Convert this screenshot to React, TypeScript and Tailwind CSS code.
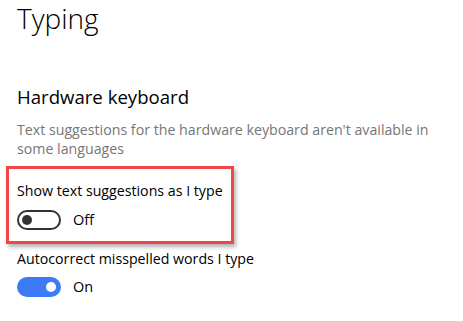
export default function App() {
  const font = { fontFamily: '"Open Sans", "Noto Sans", sans-serif' };
  return (
    <div className="w-[463px] h-[321px] bg-white overflow-hidden" style={font}>
      <div className="pl-[17px]">
        <h1 className="text-[28px] font-light leading-[34px] pt-[1px] text-[#000]">Typing</h1>
        <h2 className="mt-[49px] text-[18.6px] leading-[26px] text-[#000]">Hardware keyboard</h2>
        <p className="mt-[10px] text-[14.2px] leading-[19px] text-[#767676] w-[435px]">
          Text suggestions for the hardware keyboard aren't available in some languages
        </p>
      </div>
      <div className="ml-[6px] mt-[8px] w-[228px] h-[78px] border-[3px] border-[#f2454a] shadow-[2px_3px_4px_rgba(0,0,0,0.3)] pl-[8px] pt-[12px]">
        <div className="text-[14.2px] leading-[20px] text-[#000]">Show text suggestions as I type</div>
        <div className="mt-[8px] flex items-center gap-[12px]">
          <div className="w-[44px] h-[20px] rounded-full border-2 border-[#333] flex items-center pl-[3px]">
            <div className="w-[10px] h-[10px] rounded-full bg-[#333]" />
          </div>
          <span className="text-[14.5px] text-[#000]">Off</span>
        </div>
      </div>
      <div className="pl-[17px] mt-[5px]">
        <div className="text-[14.2px] leading-[20px] text-[#000]">Autocorrect misspelled words I type</div>
        <div className="mt-[7px] flex items-center gap-[12px]">
          <div className="w-[44px] h-[20px] rounded-full bg-[#3d7af5] flex items-center justify-end pr-[5px]">
            <div className="w-[10px] h-[10px] rounded-full bg-white" />
          </div>
          <span className="text-[14.5px] text-[#000]">On</span>
        </div>
      </div>
    </div>
  );
}
